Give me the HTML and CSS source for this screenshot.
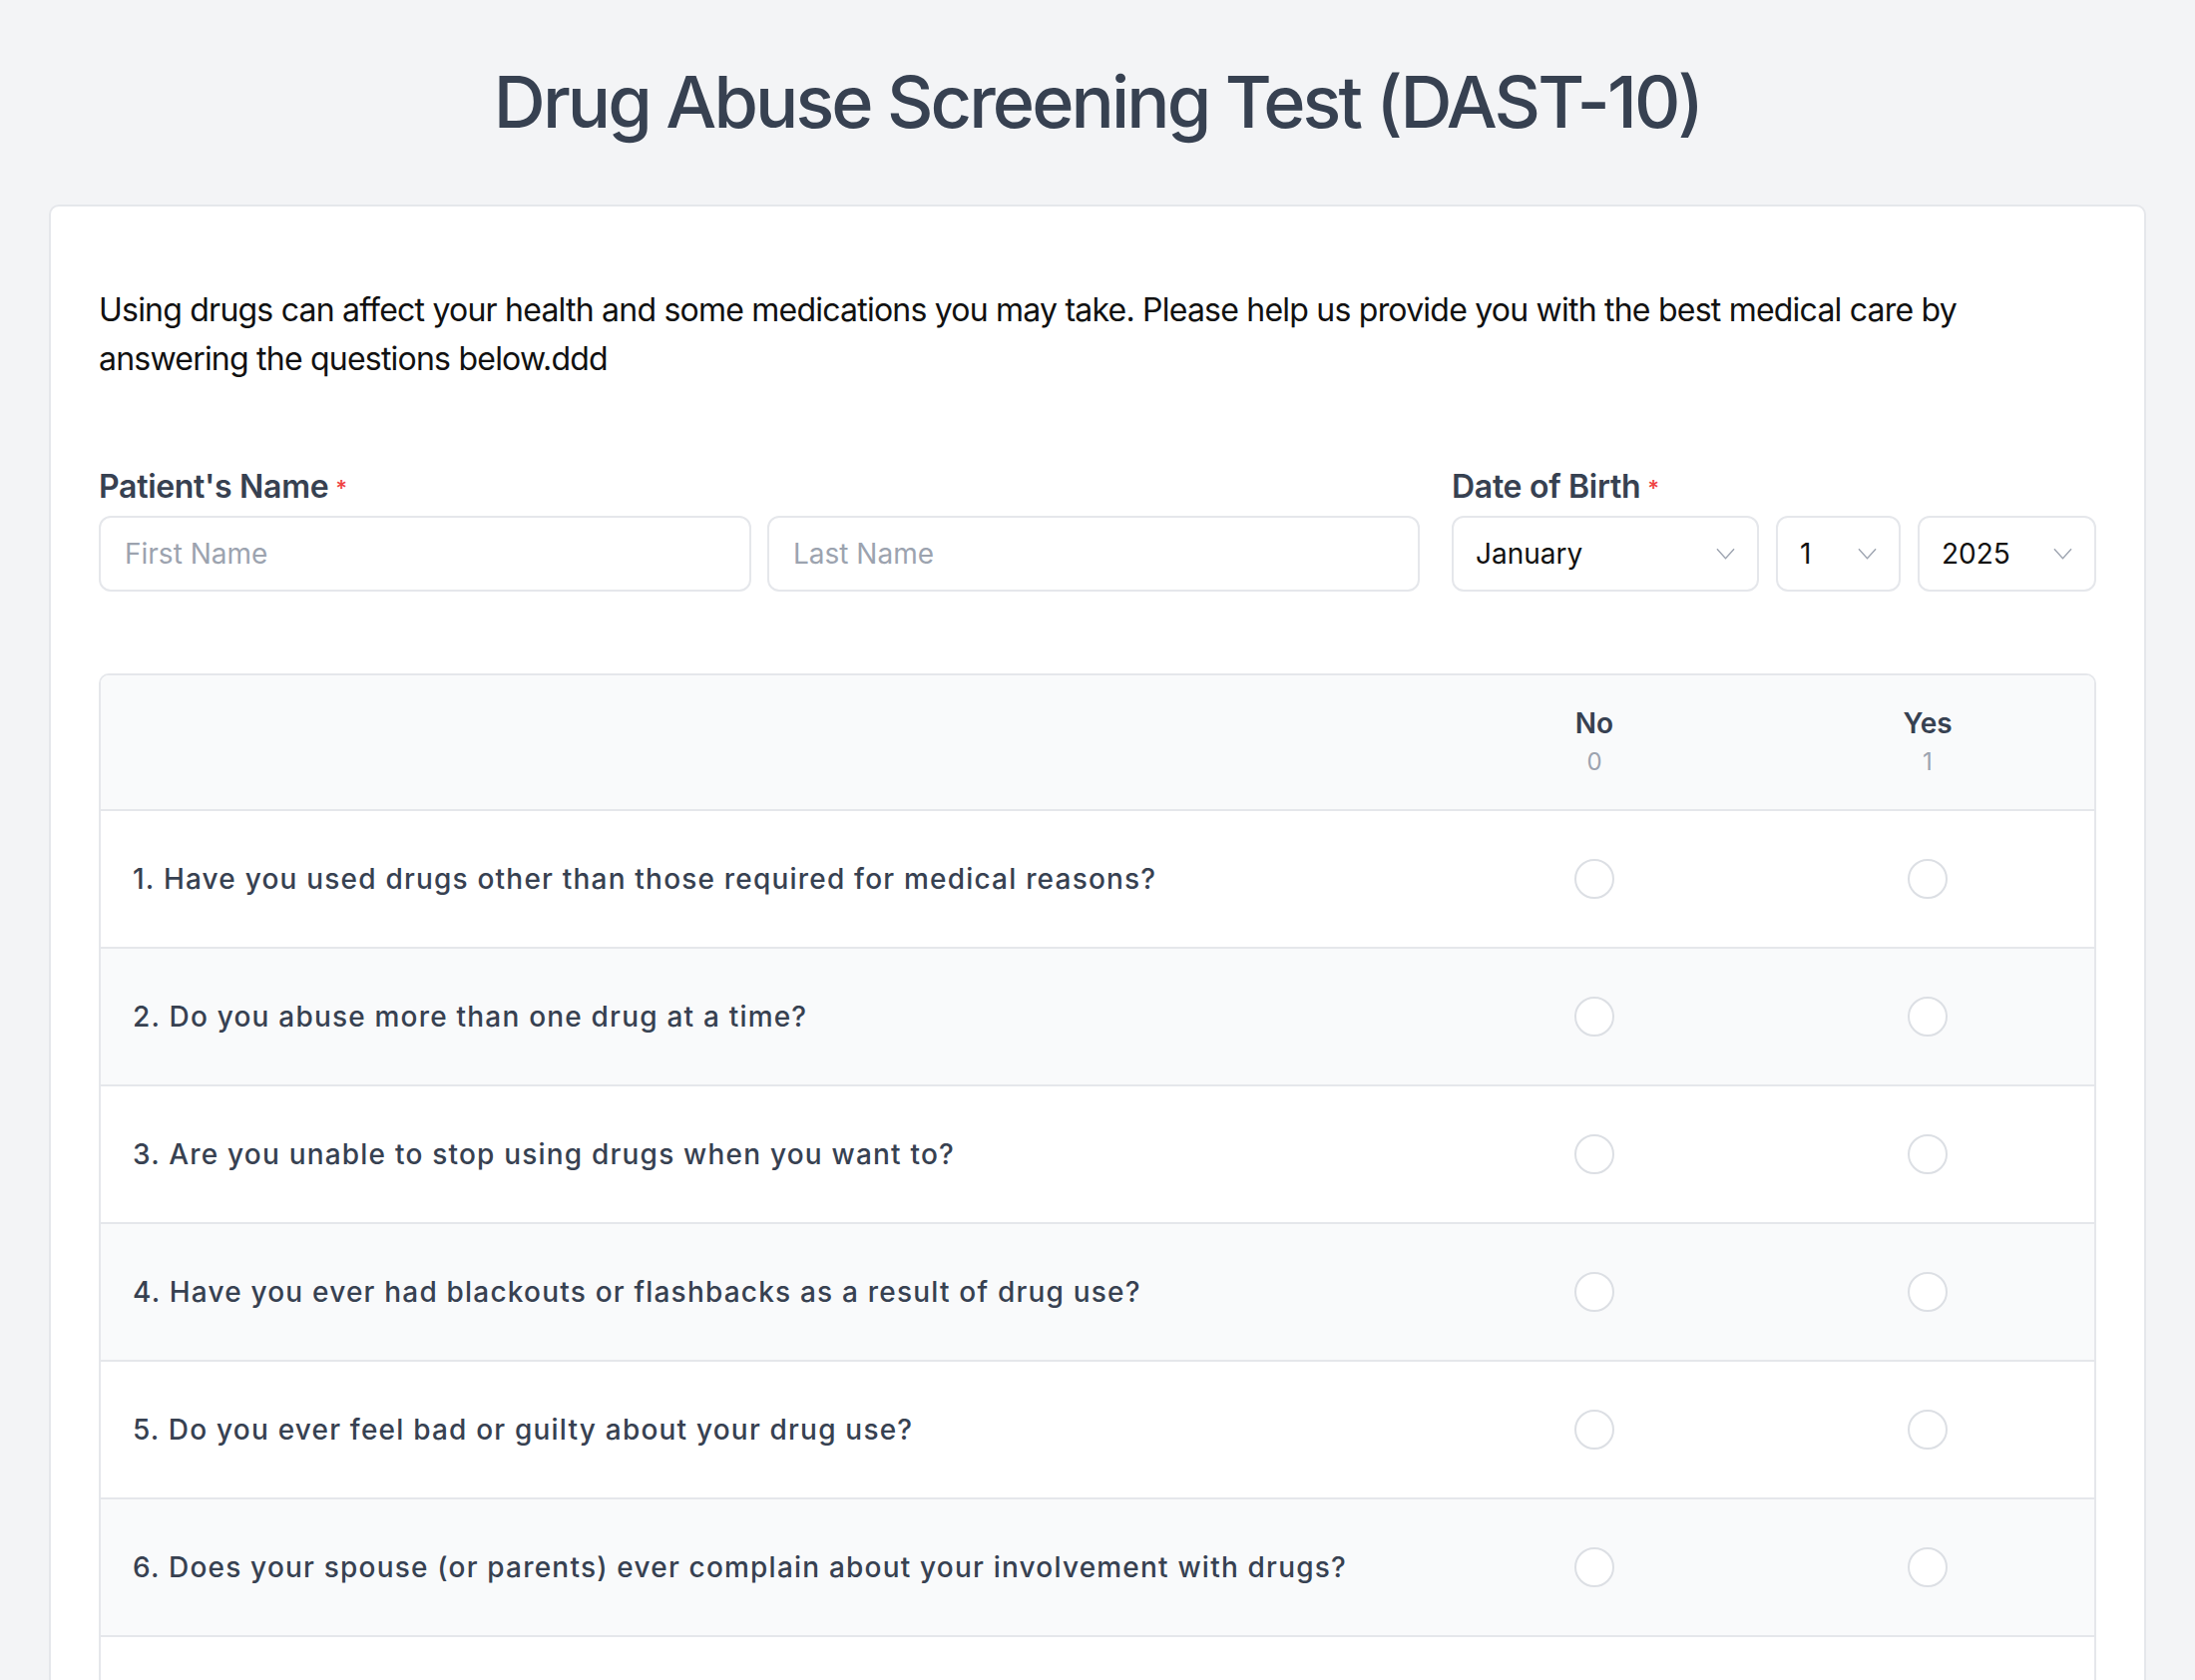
FILE: index.html
```html
<!DOCTYPE html>
<html lang="en">
<head>
<meta charset="utf-8">
<title>Drug Abuse Screening Test (DAST-10)</title>
<link rel="stylesheet" href="styles.css">
</head>
<body>
<main class="page">
  <h1 class="title">Drug Abuse Screening Test (DAST-10)</h1>
  <section class="card">
    <p class="intro">Using drugs can affect your health and some medications you may take. Please help us provide you with the best medical care by answering the questions below.ddd</p>

    <div class="fields">
      <div class="field field-name">
        <div class="label">Patient's Name<span class="req">*</span></div>
        <div class="name-inputs">
          <input class="input" type="text" placeholder="First Name">
          <input class="input" type="text" placeholder="Last Name">
        </div>
      </div>
      <div class="field field-dob">
        <div class="label">Date of Birth<span class="req">*</span></div>
        <div class="dob-selects">
          <label class="select select-month">
            <select><option>January</option></select>
            <svg class="chev" viewBox="0 0 20 12" width="20" height="12"><polyline points="1,1 10,11 19,1" fill="none" stroke="#9ca3af" stroke-width="1.4"/></svg>
          </label>
          <label class="select select-day">
            <select><option>1</option></select>
            <svg class="chev" viewBox="0 0 20 12" width="20" height="12"><polyline points="1,1 10,11 19,1" fill="none" stroke="#9ca3af" stroke-width="1.4"/></svg>
          </label>
          <label class="select select-year">
            <select><option>2025</option></select>
            <svg class="chev" viewBox="0 0 20 12" width="20" height="12"><polyline points="1,1 10,11 19,1" fill="none" stroke="#9ca3af" stroke-width="1.4"/></svg>
          </label>
        </div>
      </div>
    </div>

    <div class="matrix">
      <div class="row head">
        <div class="q"></div>
        <div class="opt-head"><div class="opt-name">No</div><div class="opt-score">0</div></div>
        <div class="opt-head"><div class="opt-name">Yes</div><div class="opt-score">1</div></div>
      </div>
      <div class="row">
        <div class="q">1. Have you used drugs other than those required for medical reasons?</div>
        <div class="cell"><span class="radio"></span></div><div class="cell"><span class="radio"></span></div>
      </div>
      <div class="row alt">
        <div class="q">2. Do you abuse more than one drug at a time?</div>
        <div class="cell"><span class="radio"></span></div><div class="cell"><span class="radio"></span></div>
      </div>
      <div class="row">
        <div class="q">3. Are you unable to stop using drugs when you want to?</div>
        <div class="cell"><span class="radio"></span></div><div class="cell"><span class="radio"></span></div>
      </div>
      <div class="row alt">
        <div class="q">4. Have you ever had blackouts or flashbacks as a result of drug use?</div>
        <div class="cell"><span class="radio"></span></div><div class="cell"><span class="radio"></span></div>
      </div>
      <div class="row">
        <div class="q">5. Do you ever feel bad or guilty about your drug use?</div>
        <div class="cell"><span class="radio"></span></div><div class="cell"><span class="radio"></span></div>
      </div>
      <div class="row alt">
        <div class="q">6. Does your spouse (or parents) ever complain about your involvement with drugs?</div>
        <div class="cell"><span class="radio"></span></div><div class="cell"><span class="radio"></span></div>
      </div>
      <div class="row">
        <div class="q">7. Have you neglected your family because of your use of drugs?</div>
        <div class="cell"><span class="radio"></span></div><div class="cell"><span class="radio"></span></div>
      </div>
      <div class="row alt">
        <div class="q">8. Have you engaged in illegal activities in order to obtain drugs?</div>
        <div class="cell"><span class="radio"></span></div><div class="cell"><span class="radio"></span></div>
      </div>
      <div class="row">
        <div class="q">9. Have you ever experienced withdrawal symptoms (felt sick) when you stopped taking drugs?</div>
        <div class="cell"><span class="radio"></span></div><div class="cell"><span class="radio"></span></div>
      </div>
      <div class="row alt">
        <div class="q">10. Have you had medical problems as a result of your drug use (e.g. memory loss, hepatitis, convulsions, bleeding, etc.)?</div>
        <div class="cell"><span class="radio"></span></div><div class="cell"><span class="radio"></span></div>
      </div>
    </div>
  </section>
</main>
</body>
</html>
```

FILE: styles.css
```css
* { box-sizing: border-box; }

html, body {
  margin: 0;
  padding: 0;
  background: #f3f4f6;
  font-family: Inter, "Noto Sans", "Liberation Sans", sans-serif;
  color: #374151;
}

.page {
  padding: 62px 49px 48px;
}

.title {
  margin: 0 0 63px;
  text-align: center;
  font-size: 72px;
  line-height: 80px;
  font-weight: 500;
  color: #374151;
  letter-spacing: -2.9px;
}

.card {
  background: #ffffff;
  border: 2px solid #e5e7eb;
  border-radius: 10px;
  padding: 79px 48px 48px;
}

.intro {
  margin: 0 0 80px;
  font-size: 32px;
  line-height: 49px;
  color: #111111;
  letter-spacing: -0.78px;
}

.fields {
  display: grid;
  grid-template-columns: repeat(3, 1fr);
  column-gap: 32px;
  margin-bottom: 82px;
}

.field-name { grid-column: span 2; }

.label {
  font-size: 32px;
  line-height: 40px;
  font-weight: 600;
  color: #374151;
  margin-top: 4px;
  margin-bottom: 8px;
  letter-spacing: -0.3px;
}

.req {
  color: #ef4444;
  font-size: 22px;
  margin-left: 7px;
  vertical-align: 2px;
}

.name-inputs {
  display: grid;
  grid-template-columns: 1fr 1fr;
  column-gap: 16px;
}

.input {
  height: 76px;
  width: 100%;
  border: 2px solid #e5e7eb;
  border-radius: 12px;
  padding: 0 24px;
  font-family: inherit;
  font-size: 28px;
  color: #111111;
  background: #ffffff;
  outline: none;
}

.input::placeholder { color: #9ca3af; }

.dob-selects {
  display: flex;
  gap: 17px;
}

.select {
  display: flex;
  align-items: center;
  height: 76px;
  border: 2px solid #e5e7eb;
  border-radius: 12px;
  padding: 0 22px 0 22px;
  background: #ffffff;
}

.select-month { flex: 1; }
.select-day { width: 125px; flex: none; }
.select-year { width: 179px; flex: none; }

.select select {
  appearance: none;
  -webkit-appearance: none;
  border: none;
  background: transparent;
  flex: 1;
  min-width: 0;
  font-family: inherit;
  font-size: 28px;
  color: #111111;
  outline: none;
  padding: 0;
}

.chev { flex: none; width: 19px; height: 12px; }

.matrix {
  border: 2px solid #e5e7eb;
  border-radius: 10px;
  overflow: hidden;
}

.row {
  display: grid;
  grid-template-columns: 1fr 334px 334px;
  align-items: center;
  min-height: 138px;
  border-bottom: 2px solid #e5e7eb;
  background: #ffffff;
}

.row:last-child { border-bottom: none; }

.row.alt, .row.head { background: #f9fafb; }

.row.head {
  align-items: start;
  padding: 28px 0 28px;
  min-height: 136px;
}

.opt-head { text-align: center; }

.opt-name {
  font-size: 28px;
  line-height: 40px;
  font-weight: 600;
  color: #374151;
}

.opt-score {
  margin-top: 3px;
  font-size: 24px;
  line-height: 32px;
  color: #9ca3af;
}

.q {
  padding: 0 32px;
  font-size: 28px;
  line-height: 40px;
  font-weight: 500;
  letter-spacing: 1.2px;
  color: #374151;
}

.cell {
  display: flex;
  justify-content: center;
  align-items: center;
}

.radio {
  display: block;
  width: 40px;
  height: 40px;
  border-radius: 50%;
  border: 2px solid #dcdfe4;
  background: #ffffff;
}
```
